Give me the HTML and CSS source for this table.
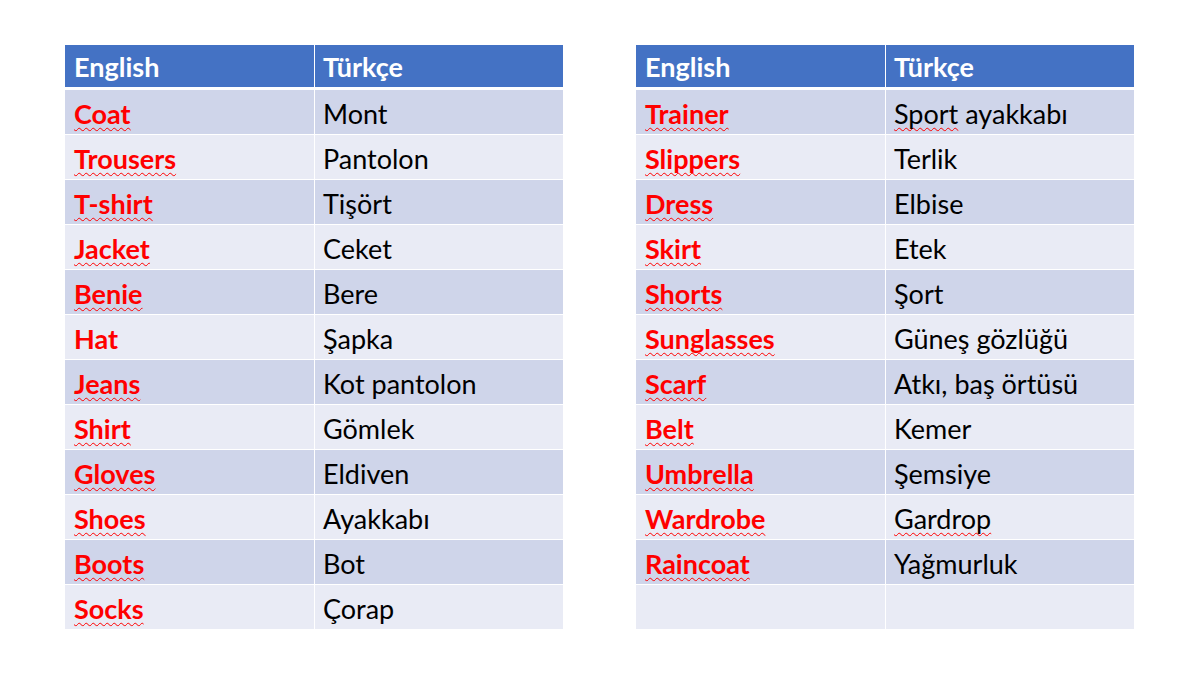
FILE: index.html
```html
<!DOCTYPE html>
<html lang="tr">
<head>
<meta charset="utf-8">
<link rel="stylesheet" href="styles.css">
</head>
<body>
<div class="page">
  <div class="table">
    <div class="cell head">English</div><div class="cell head">Türkçe</div>
    <div class="cell en odd"><span class="sp">Coat</span></div><div class="cell tr odd">Mont</div>
    <div class="cell en even"><span class="sp">Trousers</span></div><div class="cell tr even">Pantolon</div>
    <div class="cell en odd"><span class="sp">T-shirt</span></div><div class="cell tr odd">Tişört</div>
    <div class="cell en even"><span class="sp">Jacket</span></div><div class="cell tr even">Ceket</div>
    <div class="cell en odd"><span class="sp">Benie</span></div><div class="cell tr odd">Bere</div>
    <div class="cell en even">Hat</div><div class="cell tr even">Şapka</div>
    <div class="cell en odd"><span class="sp">Jeans</span></div><div class="cell tr odd">Kot pantolon</div>
    <div class="cell en even"><span class="sp">Shirt</span></div><div class="cell tr even">Gömlek</div>
    <div class="cell en odd"><span class="sp">Gloves</span></div><div class="cell tr odd">Eldiven</div>
    <div class="cell en even"><span class="sp">Shoes</span></div><div class="cell tr even">Ayakkabı</div>
    <div class="cell en odd"><span class="sp">Boots</span></div><div class="cell tr odd">Bot</div>
    <div class="cell en even"><span class="sp">Socks</span></div><div class="cell tr even">Çorap</div>
  </div>
  <div class="table">
    <div class="cell head">English</div><div class="cell head">Türkçe</div>
    <div class="cell en odd"><span class="sp">Trainer</span></div><div class="cell tr odd"><span class="sp">Sport</span>&nbsp;ayakkabı</div>
    <div class="cell en even"><span class="sp">Slippers</span></div><div class="cell tr even">Terlik</div>
    <div class="cell en odd"><span class="sp">Dress</span></div><div class="cell tr odd">Elbise</div>
    <div class="cell en even"><span class="sp">Skirt</span></div><div class="cell tr even">Etek</div>
    <div class="cell en odd"><span class="sp">Shorts</span></div><div class="cell tr odd">Şort</div>
    <div class="cell en even"><span class="sp">Sunglasses</span></div><div class="cell tr even">Güneş gözlüğü</div>
    <div class="cell en odd"><span class="sp">Scarf</span></div><div class="cell tr odd">Atkı, baş örtüsü</div>
    <div class="cell en even"><span class="sp">Belt</span></div><div class="cell tr even">Kemer</div>
    <div class="cell en odd"><span class="sp">Umbrella</span></div><div class="cell tr odd">Şemsiye</div>
    <div class="cell en even"><span class="sp">Wardrobe</span></div><div class="cell tr even"><span class="sp">Gardrop</span></div>
    <div class="cell en odd"><span class="sp">Raincoat</span></div><div class="cell tr odd">Yağmurluk</div>
    <div class="cell en even"></div><div class="cell tr even"></div>
  </div>
</div>
</body>
</html>
```
FILE: styles.css
```css
html, body {
  margin: 0;
  padding: 0;
  background: #ffffff;
}
body {
  font-family: Lato, "Open Sans", "Liberation Sans", sans-serif;
  width: 1199px;
  height: 674px;
  overflow: hidden;
}
.page {
  display: flex;
  gap: 73px;
  padding: 45px 0 0 65px;
}
.table {
  display: grid;
  grid-template-columns: 250px 248px;
  grid-auto-rows: 45px;
}
.cell {
  box-sizing: border-box;
  display: flex;
  align-items: center;
  padding: 2px 0 0 9px;
  font-size: 27px;
  color: #000000;
  border-bottom: 1px solid #ffffff;
  white-space: nowrap;
}
.cell:nth-child(odd) {
  border-right: 1px solid #ffffff;
}
.cell:nth-child(even) {
  padding-left: 8px;
}
.head {
  background: #4472c4;
  color: #ffffff;
  font-weight: bold;
  border-bottom: 3px solid #ffffff;
  padding-top: 1px;
}
.odd { background: #cfd5ea; }
.even { background: #e9ebf5; }
.en {
  color: #ff0000;
  font-weight: bold;
}
.sp {
  text-decoration: underline wavy #ff0000;
  text-decoration-thickness: 1px;
  text-underline-offset: 3px;
  text-decoration-skip-ink: none;
}
```
